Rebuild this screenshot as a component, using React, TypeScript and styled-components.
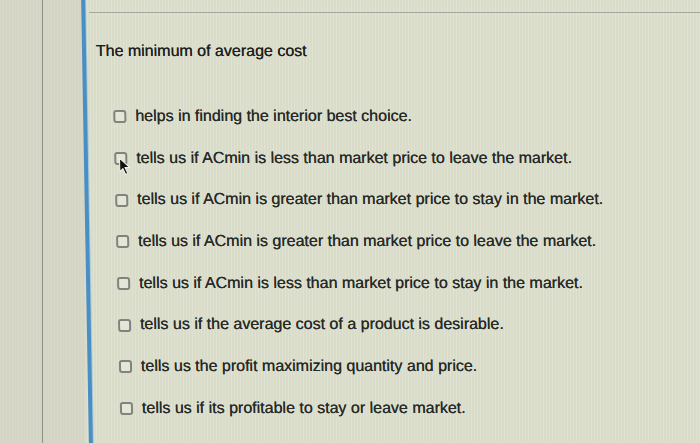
import styled, { createGlobalStyle } from 'styled-components'

const GlobalStyle = createGlobalStyle`
  html, body {
    margin: 0;
    padding: 0;
    width: 700px;
    height: 443px;
    overflow: hidden;
    background: #d9dcc9;
  }
`

const Screen = styled.div`
  position: relative;
  width: 700px;
  height: 443px;
  display: flex;
  overflow: hidden;
  font-family: "Liberation Sans", Arial, sans-serif;
  background-color: #dadcca;
  background-image: repeating-linear-gradient(
    90deg,
    rgba(255, 255, 255, 0.14) 0 1px,
    transparent 1px 3px
  );
`

const SidePane = styled.div`
  width: 85px;
  flex-shrink: 0;
  display: flex;
  background: rgba(200, 200, 188, 0.35);
`

const SideRule = styled.div`
  width: 42px;
  border-right: 1px solid #8e8f86;
`

const BlueBar = styled.div`
  width: 4px;
  flex-shrink: 0;
  background: #4a8fc4;
  box-shadow: 1px 0 0 #a9c8d6;
  transform: skewX(1deg);
`

const Main = styled.main`
  flex: 1;
  display: flex;
  flex-direction: column;
  padding-top: 12px;
`

const TopRule = styled.div`
  height: 0;
  border-top: 1px solid #a3a79c;
`

const Content = styled.div`
  display: flex;
  flex-direction: column;
  padding-left: 6px;
  transform: skewX(1.3deg);
  transform-origin: 0 0;
`

const Title = styled.h1`
  margin: 29px 0 0;
  font-size: 16px;
  line-height: 18px;
  font-weight: normal;
  color: #1e221e;
  text-shadow: 0 0 0.6px #1e221e;
`

const Options = styled.ul`
  list-style: none;
  margin: 35px 0 0;
  padding: 0 0 0 16px;
  display: flex;
  flex-direction: column;
`

const Option = styled.li`
  position: relative;
  height: 41.7px;
  display: flex;
  align-items: center;
  gap: 9px;
  font-size: 16px;
  color: #272b28;
  text-shadow: 0 0 0.6px #272b28;
`

const Box = styled.span`
  display: block;
  box-sizing: border-box;
  width: 13px;
  height: 13px;
  min-width: 13px;
  margin-top: 2px;
  flex-shrink: 0;
  border: 2px solid #80847c;
  border-radius: 3px;
  background: rgba(235, 237, 226, 0.5);
`

const Cursor = styled.svg`
  position: absolute;
  left: 4px;
  top: 20px;
  width: 13px;
  height: 19px;
`

const options = [
  'helps in finding the interior best choice.',
  'tells us if ACmin is less than market price to leave the market.',
  'tells us if ACmin is greater than market price to stay in the market.',
  'tells us if ACmin is greater than market price to leave the market.',
  'tells us if ACmin is less than market price to stay in the market.',
  'tells us if the average cost of a product is desirable.',
  'tells us the profit maximizing quantity and price.',
  'tells us if its profitable to stay or leave market.',
]

export default function App() {
  return (
    <>
      <GlobalStyle />
      <Screen>
        <SidePane>
          <SideRule />
        </SidePane>
        <BlueBar />
        <Main>
          <TopRule />
          <Content>
            <Title>The minimum of average cost</Title>
            <Options>
              {options.map((text, i) => (
                <Option key={i}>
                  <Box />
                  <span>{text}</span>
                  {i === 1 && (
                    <Cursor viewBox="0 0 12 18">
                      <path
                        d="M1 1 L1 14 L4 11 L6.5 16.5 L8.5 15.5 L6 10 L10.5 10 Z"
                        fill="#111"
                        stroke="#f2f2ea"
                        strokeWidth="1"
                        strokeLinejoin="round"
                      />
                    </Cursor>
                  )}
                </Option>
              ))}
            </Options>
          </Content>
        </Main>
      </Screen>
    </>
  )
}
